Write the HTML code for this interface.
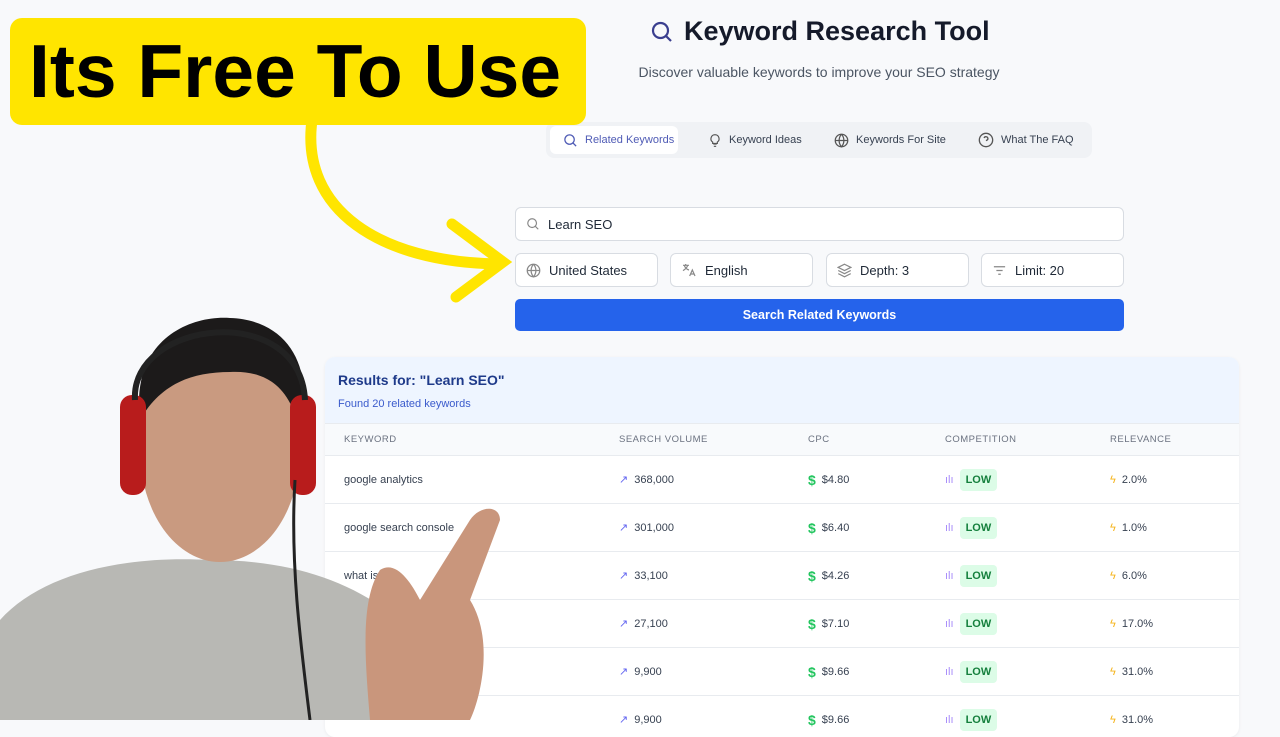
<!DOCTYPE html>
<html><head><meta charset="utf-8"><style>
*{margin:0;padding:0;box-sizing:border-box}
body{width:1280px;height:720px;overflow:hidden;background:#f8f9fb;font-family:"Liberation Sans",sans-serif;position:relative;color:#111827}
.abs{position:absolute}
.title{left:650px;top:16px;font-size:27px;font-weight:bold;color:#151a2a;display:flex;align-items:center;gap:10px;white-space:nowrap}
.sub{left:0;width:1638px;top:64px;text-align:center;font-size:14px;color:#4b5563}
.tabs{left:546px;top:122px;width:546px;height:36px;background:#f0f2f5;border-radius:8px;font-size:11px;color:#374151;white-space:nowrap}
.tab{position:absolute;top:4px;height:28px;display:flex;align-items:center;gap:7px}
.field{background:#fff;border:1px solid #d8dce2;border-radius:6px;display:flex;align-items:center;gap:8px;padding-left:10px;font-size:13px;color:#1f2937}
.btn{left:515px;top:299px;width:609px;height:32px;background:#2563eb;border-radius:5px;color:#fff;font-weight:bold;font-size:12.5px;text-align:center;line-height:32px}
.card{left:325px;top:357px;width:914px;height:380px;background:#fff;border-radius:10px;overflow:hidden;box-shadow:0 1px 3px rgba(0,0,0,.06)}
.chead{height:66px;background:#eef5ff;padding:15px 13px}
.chead b{font-size:14px;color:#1e3a8a}
.chead div{font-size:11px;color:#3b5bcc;margin-top:8px}
.th{height:32px;background:#f8fafc;font-size:9.5px;color:#6b7280;letter-spacing:.5px;position:relative;border-top:1px solid #e8ebef}
.row{height:48px;border-top:1px solid #e8ebef;position:relative;font-size:11px;color:#374151}
.c{position:absolute;top:0;height:100%;display:flex;align-items:center;gap:6px;white-space:nowrap}
.low{background:#dcfce7;color:#15803d;font-weight:bold;font-size:11px;padding:5px 6px;border-radius:4px}
</style></head><body>

<div class="abs title"><svg width="24" height="24" viewBox="0 0 24 24" fill="none" stroke="#3b3f8f" stroke-width="2.2"><circle cx="10.5" cy="10.5" r="7.5"/><path d="M16 16l5 5"/></svg>Keyword Research Tool</div>
<div class="abs sub">Discover valuable keywords to improve your SEO strategy</div>

<div class="abs tabs">
 <div class="tab" style="left:4px;width:128px;background:#fff;border-radius:6px;padding-left:13px;color:#4f5bb5"><svg width="15" height="15" viewBox="0 0 24 24" fill="none" stroke="#4f5bb5" stroke-width="2"><circle cx="10.5" cy="10.5" r="7.5"/><path d="M16 16l5 5"/></svg>Related Keywords</div>
 <div class="tab" style="left:162px"><svg width="14" height="15" viewBox="0 0 24 24" fill="none" stroke="#555" stroke-width="2"><path d="M9 18h6M10 22h4M12 2a7 7 0 0 0-4 12.7V17h8v-2.3A7 7 0 0 0 12 2z"/></svg>Keyword Ideas</div>
 <div class="tab" style="left:288px"><svg width="15" height="15" viewBox="0 0 24 24" fill="none" stroke="#555" stroke-width="2"><circle cx="12" cy="12" r="10"/><path d="M2 12h20M12 2a15 15 0 0 1 0 20a15 15 0 0 1 0-20"/></svg>Keywords For Site</div>
 <div class="tab" style="left:432px"><svg width="16" height="16" viewBox="0 0 24 24" fill="none" stroke="#555" stroke-width="2"><circle cx="12" cy="12" r="10"/><path d="M9.1 9a3 3 0 0 1 5.8 1c0 2-3 3-3 3M12 17h.01"/></svg>What The FAQ</div>
</div>

<div class="abs field" style="left:515px;top:207px;width:609px;height:34px"><svg width="14" height="14" viewBox="0 0 24 24" fill="none" stroke="#888" stroke-width="2"><circle cx="10.5" cy="10.5" r="7.5"/><path d="M16 16l5 5"/></svg>Learn SEO</div>
<div class="abs field" style="left:515px;top:253px;width:143px;height:34px"><svg width="15" height="15" viewBox="0 0 24 24" fill="none" stroke="#888" stroke-width="2"><circle cx="12" cy="12" r="10"/><path d="M2 12h20M12 2a15 15 0 0 1 0 20a15 15 0 0 1 0-20"/></svg>United States</div>
<div class="abs field" style="left:670px;top:253px;width:143px;height:34px"><svg width="16" height="16" viewBox="0 0 24 24" fill="none" stroke="#888" stroke-width="1.8"><path d="M3 5h9M7 3v2M5 5c1 4 4 6 7 7M10 5c-1 4-4 6-7 8"/><path d="M13 21l4-9 4 9M14.5 18h5"/></svg>English</div>
<div class="abs field" style="left:826px;top:253px;width:143px;height:34px"><svg width="15" height="15" viewBox="0 0 24 24" fill="none" stroke="#888" stroke-width="2"><path d="M12 2l10 5-10 5L2 7z"/><path d="M2 12l10 5 10-5M2 17l10 5 10-5"/></svg>Depth: 3</div>
<div class="abs field" style="left:981px;top:253px;width:143px;height:34px"><svg width="15" height="15" viewBox="0 0 24 24" fill="none" stroke="#888" stroke-width="2"><path d="M3 6h18M7 12h10M10 18h4"/></svg>Limit: 20</div>
<div class="abs btn">Search Related Keywords</div>

<div class="abs card">
 <div class="chead"><b>Results for: "Learn SEO"</b><div>Found 20 related keywords</div></div>
 <div class="th"><span class="c" style="left:19px">KEYWORD</span><span class="c" style="left:294px">SEARCH VOLUME</span><span class="c" style="left:483px">CPC</span><span class="c" style="left:620px">COMPETITION</span><span class="c" style="left:785px">RELEVANCE</span></div>
 <div class="row"><span class="c" style="left:19px">google analytics</span><span class="c" style="left:294px"><i style="color:#6366f1;font-style:normal">↗</i>368,000</span><span class="c" style="left:483px"><b style="color:#22c55e;font-size:14px">$</b>$4.80</span><span class="c" style="left:620px"><i style="color:#a78bfa;font-style:normal">ılı</i><span class="low">LOW</span></span><span class="c" style="left:785px"><i style="color:#f5b31a;font-style:normal">ϟ</i>2.0%</span></div>
 <div class="row"><span class="c" style="left:19px">google search console</span><span class="c" style="left:294px"><i style="color:#6366f1;font-style:normal">↗</i>301,000</span><span class="c" style="left:483px"><b style="color:#22c55e;font-size:14px">$</b>$6.40</span><span class="c" style="left:620px"><i style="color:#a78bfa;font-style:normal">ılı</i><span class="low">LOW</span></span><span class="c" style="left:785px"><i style="color:#f5b31a;font-style:normal">ϟ</i>1.0%</span></div>
 <div class="row"><span class="c" style="left:19px">what is seo</span><span class="c" style="left:294px"><i style="color:#6366f1;font-style:normal">↗</i>33,100</span><span class="c" style="left:483px"><b style="color:#22c55e;font-size:14px">$</b>$4.26</span><span class="c" style="left:620px"><i style="color:#a78bfa;font-style:normal">ılı</i><span class="low">LOW</span></span><span class="c" style="left:785px"><i style="color:#f5b31a;font-style:normal">ϟ</i>6.0%</span></div>
 <div class="row"><span class="c" style="left:294px"><i style="color:#6366f1;font-style:normal">↗</i>27,100</span><span class="c" style="left:483px"><b style="color:#22c55e;font-size:14px">$</b>$7.10</span><span class="c" style="left:620px"><i style="color:#a78bfa;font-style:normal">ılı</i><span class="low">LOW</span></span><span class="c" style="left:785px"><i style="color:#f5b31a;font-style:normal">ϟ</i>17.0%</span></div>
 <div class="row"><span class="c" style="left:294px"><i style="color:#6366f1;font-style:normal">↗</i>9,900</span><span class="c" style="left:483px"><b style="color:#22c55e;font-size:14px">$</b>$9.66</span><span class="c" style="left:620px"><i style="color:#a78bfa;font-style:normal">ılı</i><span class="low">LOW</span></span><span class="c" style="left:785px"><i style="color:#f5b31a;font-style:normal">ϟ</i>31.0%</span></div>
 <div class="row"><span class="c" style="left:294px"><i style="color:#6366f1;font-style:normal">↗</i>9,900</span><span class="c" style="left:483px"><b style="color:#22c55e;font-size:14px">$</b>$9.66</span><span class="c" style="left:620px"><i style="color:#a78bfa;font-style:normal">ılı</i><span class="low">LOW</span></span><span class="c" style="left:785px"><i style="color:#f5b31a;font-style:normal">ϟ</i>31.0%</span></div>
</div>

<svg class="abs" style="left:0;top:0" width="1280" height="720">
 <path d="M312 120 C300 210 380 262 498 264" fill="none" stroke="#ffe500" stroke-width="11" stroke-linecap="round"/>
 <path d="M452 224 L503 262 L456 297" fill="none" stroke="#ffe500" stroke-width="11" stroke-linejoin="miter" stroke-linecap="round"/>
 <path d="M0 720 L0 620 C40 575 120 555 210 560 C290 560 350 580 400 620 L420 720 Z" fill="#b8b8b4"/>
 <ellipse cx="220" cy="450" rx="80" ry="112" fill="#c99a80"/>
 <path d="M140 420 C130 340 190 315 230 318 C290 320 315 370 300 430 C290 390 270 370 230 372 C190 372 160 385 140 420Z" fill="#1c1a1a"/>
 <rect x="120" y="395" width="26" height="100" rx="12" fill="#b81c1c"/>
 <rect x="290" y="395" width="26" height="100" rx="12" fill="#b81c1c"/>
 <path d="M135 400 C130 320 300 300 305 400" fill="none" stroke="#222" stroke-width="6"/>
 <path d="M295 480 C290 560 300 640 310 720" fill="none" stroke="#222" stroke-width="3"/>
 <path d="M370 720 C365 660 360 600 380 570 C395 560 410 580 420 600 L470 520 C480 505 500 505 500 520 L470 600 C495 640 480 700 470 720 Z" fill="#c9967c"/>
</svg>

<div class="abs" style="left:10px;top:18px;width:576px;height:107px;background:#ffe500;border-radius:12px;font-size:75px;font-weight:bold;color:#000;line-height:107px;padding-left:19px;white-space:nowrap;overflow:hidden">Its Free To Use</div>

</body></html>
